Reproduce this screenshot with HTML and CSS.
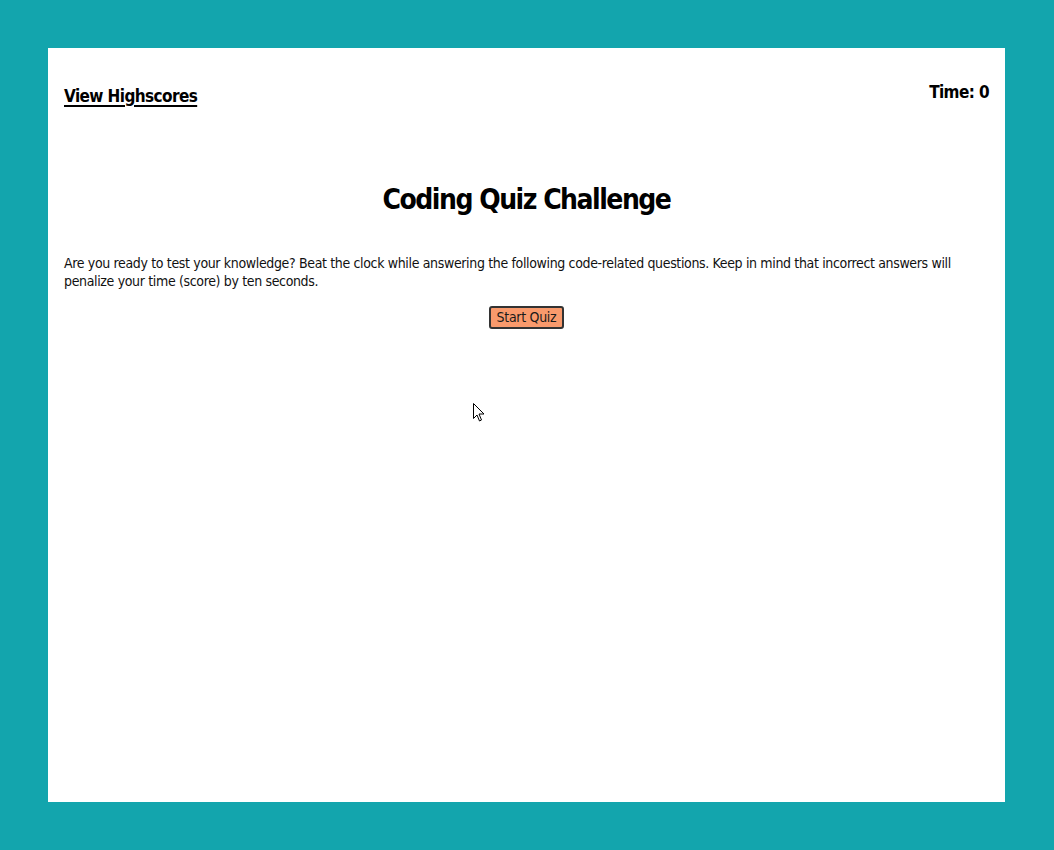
FILE: index.html
```html
<!DOCTYPE html>
<html lang="en">
<head>
<meta charset="utf-8">
<title>Coding Quiz Challenge</title>
<link rel="stylesheet" href="styles.css">
</head>
<body>
<main class="card">
  <header class="topbar">
    <a class="highscores" href="#">View Highscores</a>
    <div class="timer">Time: <span class="time-value">0</span></div>
  </header>
  <section class="intro">
    <h1 class="title">Coding Quiz Challenge</h1>
    <p class="lead">Are you ready to test your knowledge? Beat the clock while answering the following code-related questions. Keep in mind that incorrect answers will penalize your time (score) by ten seconds.</p>
    <button class="start-btn" type="button">Start Quiz</button>
  </section>
  <svg class="cursor" width="12" height="20" viewBox="0 0 12 20"><path d="M0.5 0.5 L0.5 15.5 L4 12 L6.5 18 L8.5 17 L6 11 L11 11 Z" fill="#fff" stroke="#000" stroke-width="1"/></svg>
</main>
</body>
</html>
```
FILE: styles.css
```css
html, body {
  margin: 0;
  padding: 0;
}
body {
  background: #13a5ad;
  padding: 48px 49px 48px 48px;
  font-family: "DejaVu Sans Condensed", "DejaVu Sans", sans-serif;
  color: #000;
}
.card {
  position: relative;
  background: #fff;
  height: 754px;
  box-sizing: border-box;
  padding: 0 16px;
}
.topbar {
  display: flex;
  justify-content: space-between;
  align-items: flex-start;
  padding-top: 32px;
}
.highscores {
  color: #000;
  font-weight: bold;
  font-size: 17px;
  letter-spacing: -0.6px;
  margin-top: 6px;
  text-decoration: underline;
  text-decoration-thickness: 2px;
  text-underline-offset: 3px;
}
.timer {
  font-weight: bold;
  font-size: 17px;
  letter-spacing: -0.6px;
  margin-top: 2px;
}
.intro {
  text-align: center;
}
.title {
  font-size: 28px;
  letter-spacing: -1.5px;
  margin: 77px 0 0;
}
.lead {
  text-align: left;
  font-size: 14px;
  letter-spacing: -0.35px;
  line-height: 18px;
  margin: 38px 0 16px;
  color: #111;
}
.start-btn {
  font-family: inherit;
  font-size: 14px;
  letter-spacing: -0.3px;
  background: #f99a6c;
  border: 2px solid #333;
  border-radius: 3px;
  padding: 1px 6px 2px;
  color: #1a1a1a;
}
.cursor {
  position: absolute;
  left: 425px;
  top: 355px;
}
```
